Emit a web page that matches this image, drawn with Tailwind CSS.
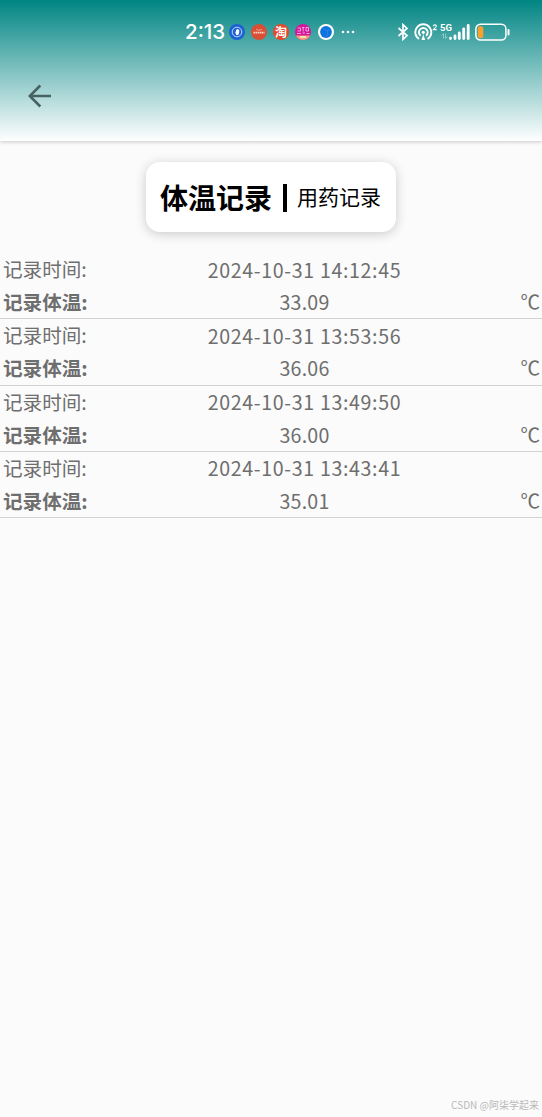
<!DOCTYPE html>
<html lang="zh-CN">
<head>
  <meta charset="UTF-8" />
  <meta name="viewport" content="width=device-width, initial-scale=1.0" />
  <title>体温记录</title>
  <script src="https://cdn.jsdelivr.net/npm/@tailwindcss/browser@4"></script>
</head>
<body class="relative min-h-screen overflow-hidden bg-[#fbfbfb] font-['Noto_Sans_CJK_SC',sans-serif] text-[#6e6e6e]">

  <header class="h-[141px] bg-linear-to-b/srgb from-[#008583] to-white shadow-[0_1px_4px_rgba(0,0,0,0.2)]">
    <!-- status bar -->
    <div class="flex h-16 items-center pl-[185px] pr-[31px] text-white">
      <span class="w-[44px] whitespace-nowrap font-['Inter',sans-serif] text-[20.5px] leading-none font-medium">2:13</span>
      <div class="flex items-center gap-[6px]">
        <svg class="size-4" viewBox="0 0 16 16">
          <circle cx="8" cy="8" r="8" fill="#1c62d2" />
          <circle cx="8" cy="8" r="4.8" fill="none" stroke="#cfe2ff" stroke-width=".9" />
          <path d="M6 7.500L7.300 11h2l.9-2.500V6L8.500 5 7 6v2z" fill="#fff" />
        </svg>
        <svg class="size-4" viewBox="0 0 16 16">
          <circle cx="8" cy="8" r="8" fill="#d94f35" />
          <path d="M5 5.200l1.500.8h3l1.500-.8" fill="none" stroke="#f5b5a0" stroke-width=".8" />
          <path d="M2.500 8.600h11" stroke="#fbd5c8" stroke-width="1.800" stroke-dasharray="1.500 .5" />
        </svg>
        <span class="flex size-4 items-center justify-center rounded-full bg-[#e34a2c] text-[12px] leading-none font-bold">淘</span>
        <svg class="size-4" viewBox="0 0 16 16">
          <defs><clipPath id="round"><circle cx="8" cy="8" r="8" /></clipPath></defs>
          <g clip-path="url(#round)">
            <path d="M0 0h16v16H0z" fill="#d3169a" />
            <path d="M0 11.500h16V16H0z" fill="#f3a07c" />
            <path d="M2.500 4h3v3h-3M7 3.500h2.500M8.200 3.500v4M11 3.500h2.500v3.500h-2.500zM2 9.500h4M7.500 9h2.500M11.500 9.500h3" fill="none" stroke="#ffc4ec" stroke-width=".8" />
            <path d="M5 13h6" stroke="#fff0d0" stroke-width="1.300" />
          </g>
        </svg>
        <svg class="ml-[1px] size-4" viewBox="0 0 16 16">
          <circle cx="8" cy="8" r="8" fill="#fff" />
          <circle cx="8" cy="8" r="5.900" fill="#0e73dc" />
          <path d="M5 4.500l4 2 3-1M9 6.500l1 4-3 2" fill="none" stroke="#338fea" stroke-width=".7" />
        </svg>
        <svg class="ml-[1px] h-4 w-[14px]" viewBox="0 0 14 16" fill="#fff">
          <circle cx="2" cy="8" r="1.300" /><circle cx="7" cy="8" r="1.300" /><circle cx="12" cy="8" r="1.300" />
        </svg>
      </div>
      <div class="ml-auto flex items-center">
        <svg class="h-[18px] w-[12px]" viewBox="0 0 12 18" fill="none" stroke="#fff" stroke-width="1.700">
          <path d="M1.500 5l8.500 7.500-4 3.800V1.700l4 3.800L1.500 13" />
        </svg>
        <svg class="ml-[5px] h-[18px] w-[24px]" viewBox="0 0 24 18" fill="none" stroke="#fff" stroke-width="1.900">
          <path d="M5 16a8 8 0 1 1 8.600 0" />
          <path d="M6.600 12.800a4.400 4.400 0 1 1 5.400 0" />
          <circle cx="9.300" cy="9.300" r="1.600" fill="#fff" stroke="none" />
          <path d="M7.500 17l1.800-6 1.800 6z" fill="#fff" stroke="none" />
          <path d="M19.300 3.200c.2-1.800 3.200-1.700 3 .1-.1 1-2 2.200-2.900 3.300h3.300" stroke-width="1.100" />
        </svg>
        <div class="ml-[2px] flex h-[18px] w-[30px]">
          <div class="w-[9px] font-['Roboto',sans-serif] text-[9.500px] leading-[9px] font-bold">
            <span class="block h-[10px]">5G</span>
            <svg class="ml-px h-[6px] w-[7px] opacity-40" viewBox="0 0 7 6" fill="none" stroke="#fff" stroke-width="1">
              <path d="M.5 2.500L2.500.5v5M6.500 3.500l-2 2v-5" />
            </svg>
          </div>
          <svg class="h-[18px] w-[21px]" viewBox="0 0 21 18" fill="none" stroke="#fff" stroke-width="2.800" stroke-linecap="round">
            <path d="M1.500 15.200v.3M6 13v2.500M10.300 10v5.500M14.700 6v9.500M19.200 2.500v13" />
          </svg>
        </div>
        <svg class="ml-[5px] h-[18px] w-[36px]" viewBox="0 0 36 18">
          <rect x=".9" y="1.300" width="30" height="15.700" rx="4.500" fill="none" stroke="#fff" stroke-width="1.500" />
          <rect x="2.800" y="3.300" width="5.500" height="11.700" rx="2" fill="#f9a12c" />
          <path d="M33.500 7v4.500" stroke="#fff" stroke-width="2" stroke-linecap="round" />
        </svg>
      </div>
    </div>
    <!-- toolbar -->
    <div class="flex h-16 items-center pl-7">
      <svg class="size-6" viewBox="0 0 24 24" fill="none" stroke="#486163" stroke-width="2.600">
        <path d="M12.300 1.500L1.800 12l10.500 10.500M2 12h21" />
      </svg>
    </div>
  </header>

  <main>
    <div class="mx-auto mt-[21px] flex h-[70px] w-[250px] items-center rounded-[14px] bg-white pl-[14px] text-black shadow-[0_2px_12px_rgba(0,0,0,0.2)]">
      <span class="w-[123px] whitespace-nowrap text-[28px] leading-none font-bold">体温记录</span>
      <span class="mt-[2px] h-7 w-1 bg-black"></span>
      <span class="ml-[10px] -mt-[2px] whitespace-nowrap text-[21px] leading-none">用药记录</span>
    </div>

    <ul class="mt-[21px] text-[19.6px]"></ul>
  </main>

  <footer class="absolute right-[3px] bottom-[5px] text-[10px] leading-[14px] text-[#b9b9b9]">CSDN @阿柒学起来</footer>

  <script>
    const records = [
      ['2024-10-31 14:12:45', '33.09'],
      ['2024-10-31 13:53:56', '36.06'],
      ['2024-10-31 13:49:50', '36.00'],
      ['2024-10-31 13:43:41', '35.01'],
    ];

    document.querySelector('ul').innerHTML = records.map(([time, temp]) => `
      <li class="flex h-[66.3px] flex-col border-b border-[#d2d2d2] pr-[2px] pl-[3px] leading-8">
        <div class="flex h-[33px] items-center">
          <span class="-mt-px w-[120px]">记录时间:</span>
          <span class="w-[363px] text-center tracking-[0.65px] whitespace-nowrap">${time}</span>
        </div>
        <div class="flex h-8 items-center">
          <span class="w-[120px] font-bold">记录体温:</span>
          <span class="w-[363px] text-center tracking-[0.2px]">${temp}</span>
          <span class="-mt-[2px] ml-auto">℃</span>
        </div>
      </li>`).join('');
  </script>
</body>
</html>
